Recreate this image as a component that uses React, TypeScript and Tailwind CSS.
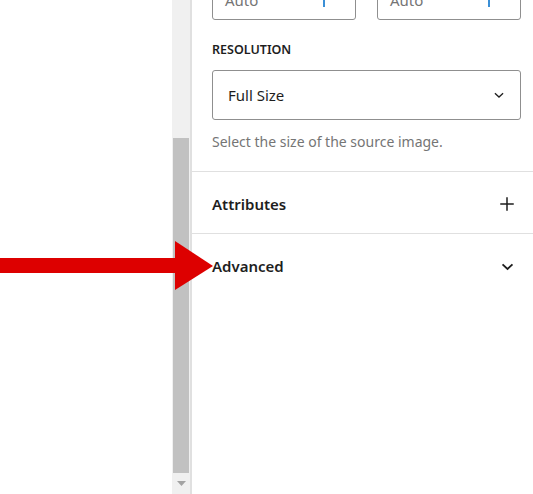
import React from "react";

const font = { fontFamily: '"Noto Sans", "Open Sans", sans-serif' };

export default function App() {
  return (
    <div className="relative flex h-[494px] w-[533px] overflow-hidden bg-white" style={font}>
      <div className="w-[172px] shrink-0 bg-white" />
      {/* scrollbar */}
      <div className="flex w-[18px] shrink-0 flex-col bg-[#f0f0f0]">
        <div className="h-[138px]" />
        <div className="mx-[1px] h-[335px] bg-[#c1c1c1]" />
        <div className="flex flex-1 items-center justify-center">
          <svg width="9" height="5" viewBox="0 0 9 5">
            <path d="M0 0 H9 L4.5 5 Z" fill="#a3a3a3" />
          </svg>
        </div>
      </div>
      <div className="w-[2px] shrink-0 bg-[#e0e0e0]" />
      {/* panel */}
      <div className="flex min-w-0 flex-1 flex-col">
        <div className="pl-5 pr-3">
          <div className="-mt-[20px] flex gap-[21px]">
            <div className="flex h-[40px] w-[145px] items-center justify-between rounded-[3px] border border-[#8f8f8f] px-[12px]">
              <span className="text-[15px] text-[#757575]">Auto</span>
              <span className="mr-[18px] h-[14px] w-[2px] bg-[#3b8fd6]" />
            </div>
            <div className="flex h-[40px] w-[145px] items-center justify-between rounded-[3px] border border-[#8f8f8f] px-[12px]">
              <span className="text-[15px] text-[#757575]">Auto</span>
              <span className="mr-[18px] h-[14px] w-[2px] bg-[#3b8fd6]" />
            </div>
          </div>
          <div className="mt-[21px] text-[12.5px] font-semibold uppercase leading-[18px] text-[#1e1e1e]">
            Resolution
          </div>
          <div className="mt-[11px] flex h-[50px] items-center justify-between rounded-[3px] border border-[#8f8f8f] pl-[15px] pr-[14px]">
            <span className="text-[15px] text-[#1e1e1e]">Full Size</span>
            <svg width="14" height="14" viewBox="0 0 24 24" fill="none" stroke="#1e1e1e" strokeWidth="2.2">
              <path d="M5 9 L12 15.5 L19 9" />
            </svg>
          </div>
          <div className="mt-[12px] text-[14px] leading-[20px] text-[#757575]">
            Select the size of the source image.
          </div>
        </div>
        <div className="mt-[19px] h-px bg-[#e0e0e0]" />
        <div className="flex h-[61px] items-center justify-between pl-5 pr-[17px] pt-[3px]">
          <span className="text-[15px] font-semibold text-[#1e1e1e]">Attributes</span>
          <svg width="18" height="18" viewBox="0 0 24 24" fill="none" stroke="#1e1e1e" strokeWidth="2">
            <path d="M12 3 V21 M3 12 H21" />
          </svg>
        </div>
        <div className="h-px bg-[#e0e0e0]" />
        <div className="flex h-[64px] items-center justify-between pl-5 pr-[17px]">
          <span className="text-[15px] font-semibold text-[#1e1e1e]">Advanced</span>
          <svg width="17" height="17" viewBox="0 0 24 24" fill="none" stroke="#1e1e1e" strokeWidth="2.6">
            <path d="M5 9 L12 15.5 L19 9" />
          </svg>
        </div>
      </div>
      {/* red arrow */}
      <svg className="absolute left-0 top-[241px]" width="214" height="50" viewBox="0 0 214 50">
        <rect x="0" y="17" width="177" height="15" fill="#dd0000" />
        <path d="M175 0 L213 25 L175 49 Z" fill="#dd0000" />
      </svg>
    </div>
  );
}
